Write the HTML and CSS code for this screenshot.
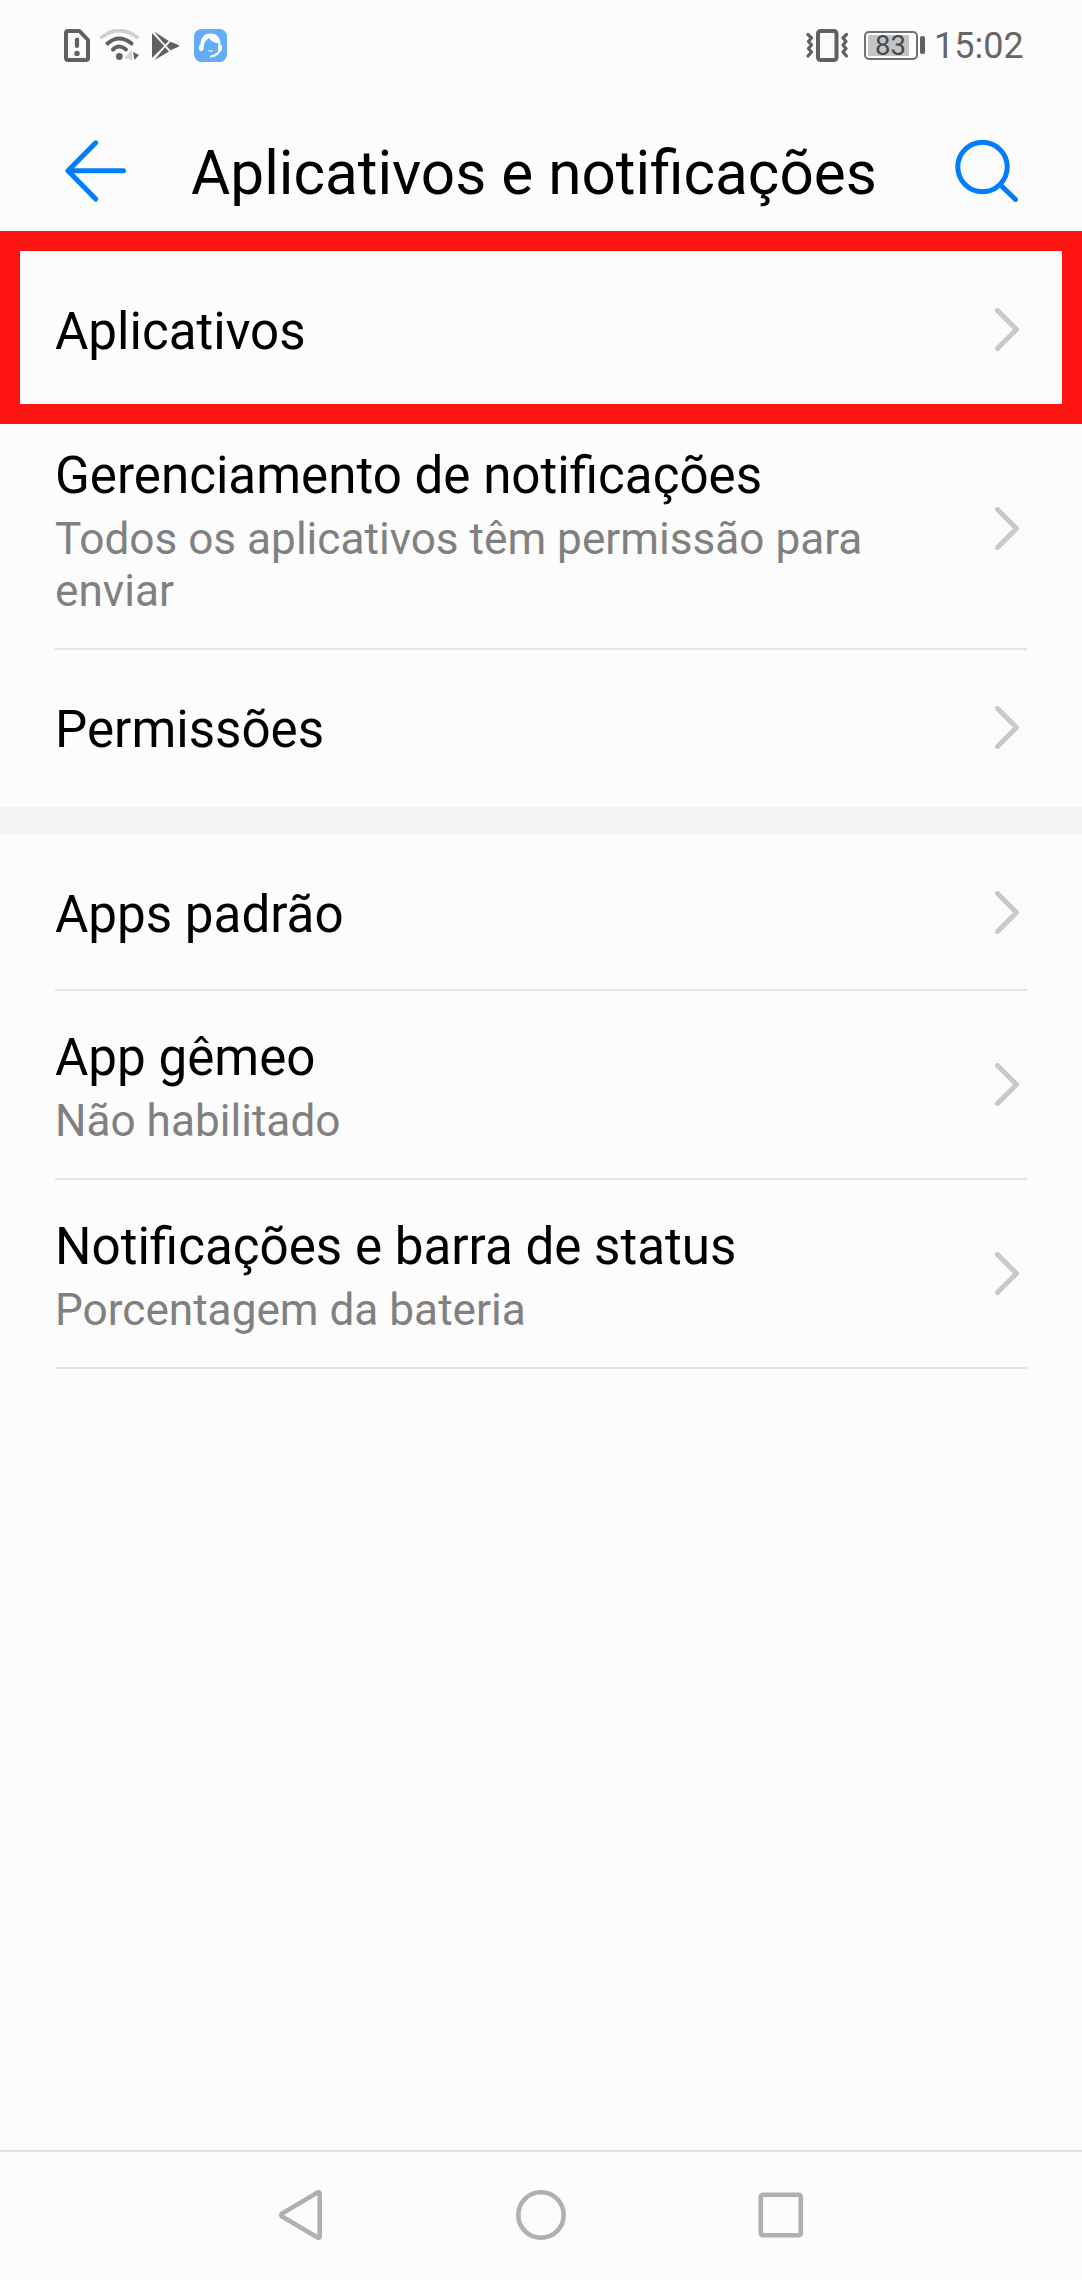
FILE: index.html
```html
<!DOCTYPE html>
<html lang="pt-BR">
<head>
<meta charset="utf-8">
<title>Aplicativos e notificações</title>
<link rel="stylesheet" href="styles.css">
</head>
<body>
<div class="screen">
  <div class="status-bar">
    <svg class="status-sim" width="26" height="33" viewBox="0 0 26 33"><path d="M4 2H15.500L24 11V29a2 2 0 0 1-2 2H4a2 2 0 0 1-2-2V4a2 2 0 0 1 2-2z" fill="none" stroke="#606060" stroke-width="4" stroke-linejoin="round"/><path d="M13 10.500V17" stroke="#606060" stroke-width="4.200" stroke-linecap="round"/><circle cx="13" cy="24.500" r="2.700" fill="#606060"/></svg>
    <svg class="status-wifi" width="40" height="33" viewBox="0 0 40 33"><g fill="none" stroke-width="4" stroke-linecap="round"><path d="M2 8Q19-5 37 8" stroke="#d0d0d0"/><path d="M7.500 14.500Q19 4.500 31.500 14.500" stroke="#606060"/><path d="M13 20.500Q19 14.500 26 20.500" stroke="#606060"/></g><circle cx="19.300" cy="27.500" r="3.400" fill="#606060"/><path d="M31 31V23L26.500 28.500H32.500" fill="none" stroke="#d0d0d0" stroke-width="2"/><path d="M33 23L39 26L34.500 31Z" fill="#606060"/></svg>
    <svg class="status-play" width="28" height="33" viewBox="0 0 28 33"><g fill="#606060"><path d="M0 4V29L12.200 17z"/><path d="M2 2.500L13 15.800L16.800 12z"/><path d="M18.500 12.800L14.500 17L18.500 21.200L26.500 17.800Q28 17 26.500 16z"/><path d="M13 18.200L2.500 31L17 22.500z"/></g></svg>
    <svg class="status-app" width="33" height="33" viewBox="0 0 33 33"><rect width="33" height="33" rx="7.500" fill="#65acf8"/><path d="M6.500 18Q6 4.500 16.500 4.500Q27 4.500 26.500 18H24.500Q25 14.500 23.500 14Q18 13.500 15 9Q10 12 9.500 18z" fill="#fff"/><rect x="5" y="15.500" width="4.500" height="6.500" rx="2" fill="#fff"/><rect x="24" y="15.500" width="4" height="6.500" rx="2" fill="#fff"/><path d="M26 21Q23.500 26.500 17 27.500" fill="none" stroke="#fff" stroke-width="2.200" stroke-linecap="round"/><path d="M14 21.500Q16.500 23 19 21.500" fill="none" stroke="#fff" stroke-width="1"/></svg>
    <span class="spacer"></span>
    <svg class="status-vibrate" width="43" height="33" viewBox="0 0 43 33"><rect x="12" y="2" width="18.500" height="29" rx="2.500" fill="none" stroke="#606060" stroke-width="4"/><path d="M2 5.500L5.500 9L2.500 12.500L5.500 16L2.500 19.500L5.500 23L2 27M40.500 5.500L37 9L40 12.500L37 16L40 19.500L37 23L40.500 27" fill="none" stroke="#606060" stroke-width="3.200" stroke-linecap="round" stroke-linejoin="round"/></svg>
    <div class="battery"><div class="battery-body"><span class="battery-level">83</span></div><span class="battery-tip"></span></div>
    <span class="clock">15:02</span>
  </div>

  <header class="app-bar">
    <svg width="62" height="62" viewBox="0 0 62 62"><path d="M30.700 2.800L3 30.800L30.700 59M3 30.800H58.500" fill="none" stroke="#007dfa" stroke-width="5" stroke-linecap="round" stroke-linejoin="round"/></svg>
    <h1 class="app-title">Aplicativos e notificações</h1>
    <svg width="64" height="62" viewBox="0 0 64 62"><circle cx="27.500" cy="27" r="24.700" fill="none" stroke="#007dfa" stroke-width="5"/><path d="M45.500 45L60.500 59.500" stroke="#007dfa" stroke-width="5" stroke-linecap="round"/></svg>
  </header>

  <main class="list">
    <div class="row highlighted">
      <div class="row-text"><div class="row-title">Aplicativos</div></div>
      <svg class="chevron" width="25" height="43" viewBox="0 0 25 43"><path d="M2.500 2.500L21.500 21.500L2.500 40.500"/></svg>
    </div>
    <div class="row tall divided">
      <div class="row-text"><div class="row-title">Gerenciamento de notificações</div><div class="row-note">Todos os aplicativos têm permissão para enviar</div></div>
      <svg class="chevron" width="25" height="43" viewBox="0 0 25 43"><path d="M2.500 2.500L21.500 21.500L2.500 40.500"/></svg>
    </div>
    <div class="row short">
      <div class="row-text"><div class="row-title">Permissões</div></div>
      <svg class="chevron" width="25" height="43" viewBox="0 0 25 43"><path d="M2.500 2.500L21.500 21.500L2.500 40.500"/></svg>
    </div>
    <div class="section-gap"></div>
    <div class="row divided">
      <div class="row-text"><div class="row-title">Apps padrão</div></div>
      <svg class="chevron" width="25" height="43" viewBox="0 0 25 43"><path d="M2.500 2.500L21.500 21.500L2.500 40.500"/></svg>
    </div>
    <div class="row medium divided">
      <div class="row-text"><div class="row-title">App gêmeo</div><div class="row-note">Não habilitado</div></div>
      <svg class="chevron" width="25" height="43" viewBox="0 0 25 43"><path d="M2.500 2.500L21.500 21.500L2.500 40.500"/></svg>
    </div>
    <div class="row medium divided">
      <div class="row-text"><div class="row-title">Notificações e barra de status</div><div class="row-note">Porcentagem da bateria</div></div>
      <svg class="chevron" width="25" height="43" viewBox="0 0 25 43"><path d="M2.500 2.500L21.500 21.500L2.500 40.500"/></svg>
    </div>
  </main>

  <nav class="nav-bar">
    <svg width="50" height="50" viewBox="0 0 50 50"><path d="M41.500 2.500Q43.700 1.500 43.700 4V46Q43.700 48.500 41.500 47.500L6 26.500Q4.500 25 6 23.500Z"/></svg>
    <svg width="50" height="50" viewBox="0 0 50 50"><circle cx="25" cy="25" r="22.700"/></svg>
    <svg width="50" height="50" viewBox="0 0 50 50"><rect x="4.800" y="4.800" width="40" height="40.500" rx="2"/></svg>
  </nav>
</div>
</body>
</html>
```

FILE: styles.css
```css
* {
  box-sizing: border-box;
}

body {
  margin: 0;
  background: #fcfcfc;
  font-family: Roboto, "Noto Sans", sans-serif;
  color: #000;
}

svg {
  display: block;
  flex: none;
}

.screen {
  display: flex;
  flex-direction: column;
  width: 1082px;
  height: 2280px;
}

.status-bar {
  display: flex;
  align-items: center;
  height: 90px;
  padding: 0 57px 0 64px;
}

.status-wifi {
  margin-left: 10px;
}

.status-play {
  margin-left: 12px;
}

.status-app {
  margin-left: 14px;
}

.spacer {
  flex: 1;
}

.battery {
  display: flex;
  align-items: center;
  gap: 2px;
  margin: 0 9px 0 15px;
}

.battery-body {
  width: 54px;
  height: 29px;
  padding: 2px 7px 2px 2px;
  border: 2px solid #707070;
  border-radius: 5px;
}

.battery-level {
  display: block;
  height: 21px;
  padding-left: 4px;
  background: #c4c4c4;
  color: #484848;
  font-size: 27.500px;
  line-height: 21px;
  text-align: center;
}

.battery-tip {
  width: 5px;
  height: 18px;
  border-radius: 2px;
  background: #606060;
}

.clock {
  width: 91px;
  padding-top: 2px;
  color: #666;
  font-size: 36px;
  line-height: 42px;
  white-space: nowrap;
}

.app-bar {
  display: flex;
  align-items: center;
  height: 161px;
  padding: 0 63px 0 65px;
}

.app-title {
  flex: 1;
  margin: 6px 0 0 64px;
  font-size: 60.250px;
  font-weight: 400;
  line-height: 72px;
  white-space: nowrap;
}

.row {
  position: relative;
  display: flex;
  align-items: center;
  justify-content: space-between;
  height: 156px;
  margin: 0 55px;
  padding-right: 7px;
}

.row.short {
  height: 155px;
}

.row.medium {
  height: 189px;
}

.row.tall {
  height: 243px;
  padding-top: 2px;
}

.row.divided {
  border-bottom: 2px solid #e4e4e4;
}

/* Red frame that calls out the first entry. */
.row.highlighted::after {
  content: "";
  position: absolute;
  inset: -20px -55px -17px;
  border: 20px solid #ff1414;
}

.row-text {
  width: 840px;
  padding-top: 5px;
}

.row-title {
  font-size: 51.150px;
  line-height: 60px;
}

.row-note {
  margin-top: 7px;
  color: #808080;
  font-size: 44.150px;
  line-height: 52px;
}

.chevron path {
  fill: none;
  stroke: #c8c8c8;
  stroke-width: 5;
  stroke-linecap: round;
  stroke-linejoin: round;
}

.section-gap {
  height: 27px;
  margin: 2px 0 1px;
  background: #f3f3f3;
}

.nav-bar {
  display: flex;
  justify-content: center;
  gap: 190px;
  height: 130px;
  margin-top: auto;
  padding-top: 38px;
  border-top: 2px solid #e0e0e0;
}

.nav-bar svg {
  fill: none;
  stroke: #b0b0b0;
  stroke-width: 4.600;
}
```
